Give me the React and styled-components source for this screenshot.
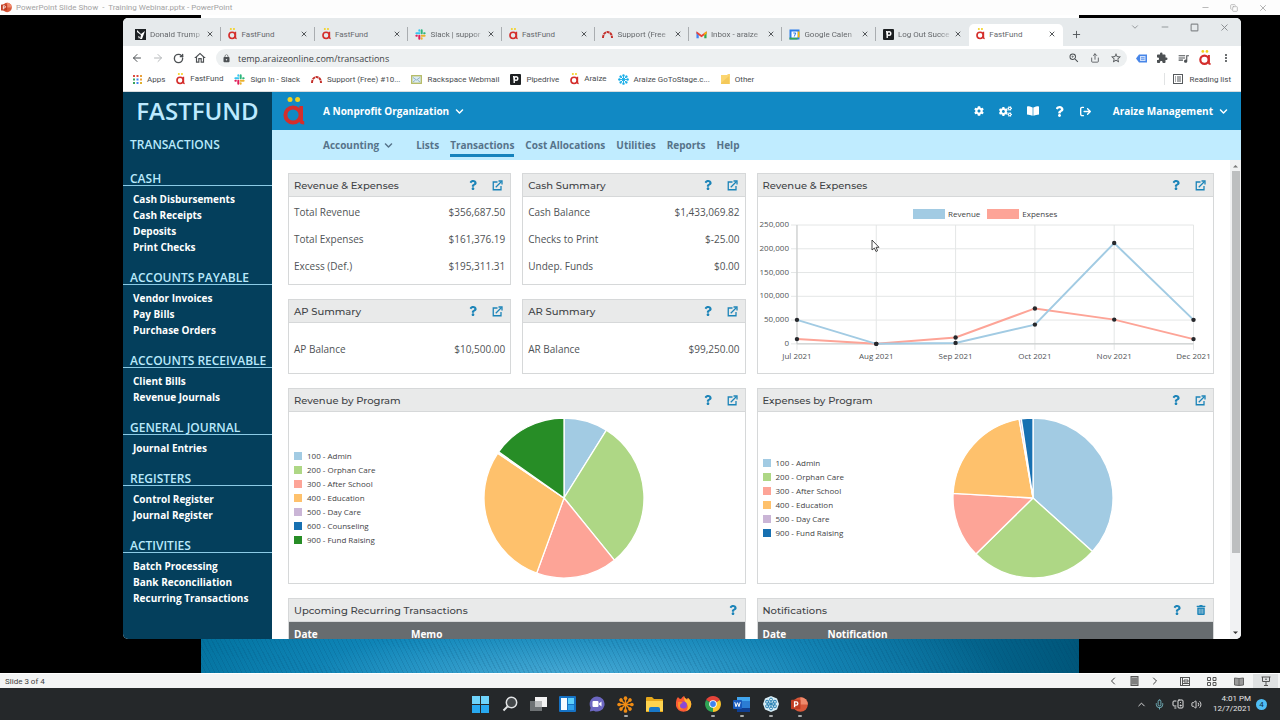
import React from "react";
import styled, { createGlobalStyle, css } from "styled-components";
import {
  FaBookOpen,
  FaChevronDown,
  FaCog,
  FaCogs,
  FaQuestion,
  FaTrashAlt,
} from "react-icons/fa";
import { FaArrowRightFromBracket } from "react-icons/fa6";
import {
  MdExtension,
  MdLock,
  MdMoreVert,
  MdOutlineHome,
  MdQueueMusic,
  MdStarBorder,
  MdZoomIn,
} from "react-icons/md";
import {
  ArrowLeft,
  ArrowRight,
  ChevronDown,
  ChevronLeft,
  ChevronRight,
  ChevronUp,
  Copy,
  Mic,
  Minus,
  MonitorSpeaker,
  Plus,
  RotateCw,
  Share,
  Square,
  Volume2,
  X,
} from "lucide-react";

const SYSTEM_FONT = `8px "Segoe UI", Roboto, "Open Sans", sans-serif`;

const GlobalStyle = createGlobalStyle`
  * {
    box-sizing: border-box;
  }
  body {
    margin: 0;
    background: #000;
    font-family: "Open Sans", "Noto Sans", sans-serif;
    font-size: 10px;
    color: #4f5356;
  }
  button {
    display: inline-flex;
    align-items: center;
    justify-content: center;
    padding: 0;
    border: 0;
    background: none;
    color: inherit;
    font: inherit;
    cursor: pointer;
  }
  a {
    color: inherit;
    text-decoration: none;
  }
  svg {
    display: block;
    flex: none;
  }
`;

/* ---------- data ---------- */

const TABS = [
  { icon: "news", label: "Donald Trump" },
  { icon: "araize", label: "FastFund" },
  { icon: "araize", label: "FastFund" },
  { icon: "slack", label: "Slack | suppor" },
  { icon: "araize", label: "FastFund" },
  { icon: "arch", label: "Support (Free" },
  { icon: "gmail", label: "Inbox - araize" },
  { icon: "calendar", label: "Google Calen" },
  { icon: "pipedrive", label: "Log Out Succe" },
  { icon: "araize", label: "FastFund", active: true },
];

const BOOKMARKS = [
  { icon: "apps", label: "Apps" },
  { icon: "araize", label: "FastFund" },
  { icon: "slack", label: "Sign In - Slack" },
  { icon: "arch", label: "Support (Free) #10..." },
  { icon: "mail", label: "Rackspace Webmail" },
  { icon: "pipedrive", label: "Pipedrive" },
  { icon: "araize", label: "Araize" },
  { icon: "goto", label: "Araize GoToStage.c..." },
  { icon: "folder", label: "Other" },
];

const SECTIONS = [
  {
    title: "Cash",
    items: ["Cash Disbursements", "Cash Receipts", "Deposits", "Print Checks"],
  },
  {
    title: "Accounts Payable",
    items: ["Vendor Invoices", "Pay Bills", "Purchase Orders"],
  },
  { title: "Accounts Receivable", items: ["Client Bills", "Revenue Journals"] },
  { title: "General Journal", items: ["Journal Entries"] },
  { title: "Registers", items: ["Control Register", "Journal Register"] },
  {
    title: "Activities",
    items: ["Batch Processing", "Bank Reconciliation", "Recurring Transactions"],
  },
];

const NAV = ["Lists", "Transactions", "Cost Allocations", "Utilities", "Reports", "Help"];

const MONTHS = ["Jul 2021", "Aug 2021", "Sep 2021", "Oct 2021", "Nov 2021", "Dec 2021"];
const REVENUE = [50500, 0, 2000, 40500, 212000, 50500];
const EXPENSES = [10000, 0, 13500, 74500, 51000, 10000];

const BLUE = "#a2cbe3";
const GREEN = "#aed785";
const PINK = "#fda497";
const ORANGE = "#fec16c";
const LAVENDER = "#cab5d6";
const NAVY = "#1770b1";
const FOREST = "#278d26";

// "to" is the angle in degrees, clockwise from the top, where the slice ends
const REVENUE_SLICES = [
  { label: "100 - Admin", color: BLUE, to: 32 },
  { label: "200 - Orphan Care", color: GREEN, to: 141 },
  { label: "300 - After School", color: PINK, to: 200 },
  { label: "400 - Education", color: ORANGE, to: 304 },
  { label: "500 - Day Care", color: LAVENDER, to: 304.8 },
  { label: "600 - Counseling", color: NAVY, to: 305.2 },
  { label: "900 - Fund Raising", color: FOREST, to: 360 },
];

const EXPENSE_SLICES = [
  { label: "100 - Admin", color: BLUE, to: 132 },
  { label: "200 - Orphan Care", color: GREEN, to: 225.5 },
  { label: "300 - After School", color: PINK, to: 273.3 },
  { label: "400 - Education", color: ORANGE, to: 350 },
  { label: "500 - Day Care", color: LAVENDER, to: 351.6 },
  { label: "900 - Fund Raising", color: NAVY, to: 360 },
];

/* ---------- icons ---------- */

const AraizeMark = ({ size = 11 }) => (
  <svg width={size} height={(size * 28) / 22} viewBox="0 0 22 28" aria-hidden="true">
    <circle cx="7" cy="2.6" r="2.5" fill="#f3d21f" />
    <circle cx="14.6" cy="2.6" r="2.5" fill="#f3d21f" />
    <circle cx="10" cy="18" r="7.6" fill="none" stroke="#d42e2c" strokeWidth="4" />
    <path d="M18.2 9v15q0 1.8 3 1.8" fill="none" stroke="#d42e2c" strokeWidth="3.6" />
  </svg>
);

const Snowflake = ({ size, color }) => (
  <svg width={size} height={size} viewBox="0 0 24 24" aria-hidden="true">
    {[0, 45, 90, 135, 180, 225, 270, 315].map((a) => (
      <g key={a} transform={`rotate(${a} 12 12)`}>
        <path d="M12 12V4" stroke={color} strokeWidth="2" />
        <circle cx="12" cy="3" r="2.6" fill={color} />
      </g>
    ))}
  </svg>
);

const PipedriveMark = () => (
  <svg width="11" height="11" viewBox="0 0 11 11" aria-hidden="true">
    <rect width="11" height="11" rx="1" fill="#1d2022" />
    <circle cx="6" cy="4.6" r="1.8" fill="none" stroke="#fff" strokeWidth="1.4" />
    <path d="M4.2 2.6v6.4M3 2.8h1.4" stroke="#fff" strokeWidth="1.4" />
  </svg>
);

const FAVICONS = {
  araize: <AraizeMark size={9} />,
  pipedrive: <PipedriveMark />,
  goto: <Snowflake size={11} color="#18aee8" />,
  news: (
    <svg width="11" height="11" viewBox="0 0 11 11">
      <rect width="11" height="11" fill="#1d2124" />
      <path d="M2 1l4 4 4-3-3 8H5l1-4L2 3zM3 7l2 1-1 2z" fill="#fff" />
    </svg>
  ),
  slack: (
    <svg width="11" height="11" viewBox="0 0 24 24" strokeWidth="4.4" strokeLinecap="round">
      <path d="M9.4 3v1M3 9.4h6.4" stroke="#36c5f0" />
      <path d="M14.6 3v6.4M21 9.4h-1" stroke="#2eb67d" />
      <path d="M14.6 14.6H21M14.6 21v-1" stroke="#ecb22e" />
      <path d="M9.4 14.6V21M3 14.6h1" stroke="#e01e5a" />
    </svg>
  ),
  arch: (
    <svg width="11" height="11" viewBox="0 0 11 11">
      <path d="M1 9C1 1 10 1 10 9" fill="none" stroke="#c4302b" strokeWidth="2" strokeDasharray="3 0.6" />
    </svg>
  ),
  gmail: (
    <svg width="11" height="11" viewBox="0 0 24 24">
      <path d="M1 6v14h5V10z" fill="#4285f4" />
      <path d="M23 6v14h-5V10z" fill="#34a853" />
      <path d="M1 5l11 8 11-8v5l-11 8L1 10z" fill="#ea4335" />
      <path d="M18 9l5-4v5l-5 4z" fill="#fbbc04" />
    </svg>
  ),
  calendar: (
    <svg width="11" height="11" viewBox="0 0 22 22">
      <path d="M1 1h20v20H1z" fill="#2b7de9" />
      <path d="M17 5h4v12h-4z" fill="#fbbc04" />
      <path d="M1 17h16v4H1z" fill="#34a853" />
      <path d="M5 5h12v12H5z" fill="#fff" />
      <path d="M8.5 8h5l-3 7" fill="none" stroke="#2b7de9" strokeWidth="2" />
    </svg>
  ),
  apps: (
    <svg width="9" height="9" viewBox="0 0 9 9">
      <path d="M0 0h2v2H0zM3.5 0h2v2h-2z" fill="#dc4b3e" />
      <path d="M7 0h2v2H7zM7 3.5h2v2H7z" fill="#e9a13b" />
      <path d="M0 3.5h2v2H0zM0 7h2v2H0z" fill="#3aa35a" />
      <path d="M3.5 3.5h2v2h-2zM3.5 7h2v2h-2z" fill="#4285f4" />
      <path d="M7 7h2v2H7z" fill="#e0b030" />
    </svg>
  ),
  mail: (
    <svg width="11" height="9" viewBox="0 0 11 9">
      <rect x=".7" y=".7" width="9.6" height="7.6" fill="#dcebf2" stroke="#b3b962" strokeWidth="1.3" />
      <path d="M2 2.5l3.5 2.5L9 2.5M2 7l2.5-2M9 7L6.5 5" fill="none" stroke="#7fa6ba" strokeWidth=".8" />
    </svg>
  ),
  folder: (
    <svg width="9" height="10" viewBox="0 0 9 10">
      <path d="M0 1h6l1-1h2v10H0z" fill="#fbd570" />
      <path d="M8 2v8H0V9z" fill="#f4c95a" />
    </svg>
  ),
};

const ExternalLinkIcon = () => (
  <svg width="11" height="11" viewBox="0 0 22 22" fill="none" stroke="currentColor" strokeWidth="2.6">
    <path d="M11 4H2.5v15.5H18V12" />
    <path d="M7.5 14.5L19 3" />
    <path d="M13 2h7v7" />
  </svg>
);

const ReadingListIcon = () => (
  <svg width="10" height="10" viewBox="0 0 10 10" fill="none" stroke="#55595c">
    <rect x=".5" y=".5" width="9" height="9" />
    <path d="M2 3h1M4 3h4M2 5h1M4 5h4M2 7h1M4 7h4" />
  </svg>
);

const ExtensionIcon = () => (
  <svg width="11" height="9" viewBox="0 0 11 9" aria-hidden="true">
    <path d="M0 4.5L3 .5h8v8H3z" fill="#4886e8" />
    <rect x="4" y="2" width="5.5" height="5" fill="#cfe0fb" />
    <path d="M5 3.7h3.5M5 5.3h3.5" stroke="#4886e8" strokeWidth=".8" />
  </svg>
);

/* ---------- desktop shell ---------- */

const Desktop = styled.div`
  position: relative;
  display: flex;
  flex-direction: column;
  height: 100vh;
  min-height: 480px;
  overflow: hidden;
`;

const TitleBar = styled.header`
  display: flex;
  align-items: center;
  gap: 4px;
  height: 15px;
  padding: 0 12px 0 1px;
  background: #fdfdfd;
  color: #a3a3a3;
  font: ${SYSTEM_FONT};
  white-space: pre;
`;

const TitleControls = styled.div`
  display: flex;
  gap: 20px;
  margin-left: auto;
`;

const Stage = styled.div`
  position: relative;
  flex: 1;
  min-height: 0;
  display: flex;
  justify-content: center;
`;

const Slide = styled.div`
  height: 100%;
  aspect-ratio: 4 / 3;
  border-top: 3px solid #fff;
  background:
    repeating-linear-gradient(63deg, rgba(0, 60, 100, 0.14) 0 1px, transparent 1px 4px),
    radial-gradient(ellipse 50% 14% at 42% 101%, #4aabd6, rgba(30, 140, 190, 0.5) 60%, transparent),
    linear-gradient(90deg, #00709c, #0081b5 25%, #0a7fb0 65%, #00567a);
`;

const SlideBar = styled.footer`
  display: flex;
  align-items: center;
  height: 15px;
  padding: 0 2px 0 5px;
  background: #f3f4f4;
  border-top: 1px solid #fff;
  color: #3f3f3f;
  font: ${SYSTEM_FONT};
`;

const SlideTools = styled.div`
  display: flex;
  align-items: center;
  align-self: stretch;
  gap: 11px;
  margin-left: auto;
`;

const ViewTools = styled(SlideTools)`
  margin-left: 6px;
`;

const SlideButton = styled.button`
  align-self: stretch;
  width: ${(p) => (p.$wide ? "16px" : "10px")};
  ${(p) => p.$active && css`
    width: 25px;
    margin-left: -5px;
    background: #dfe1e2;
  `}
`;

/* ---------- browser window ---------- */

const BrowserWindow = styled.main`
  position: absolute;
  inset: 3px 39px 34px 123px;
  display: flex;
  flex-direction: column;
  overflow: hidden;
  border-radius: 5px;
  background: #fff;
`;

const TabStrip = styled.div`
  display: flex;
  align-items: flex-end;
  height: 28px;
  padding-left: 5px;
  background: #e6eaec;
`;

const TabItem = styled.div`
  display: flex;
  align-items: center;
  flex: 0 1 8.4%;
  min-width: 0;
  gap: 4px;
  height: 22px;
  padding: 0 6px 2px 7px;
  border-radius: 5px 5px 0 0;
  background: ${(p) => (p.$active ? "#fff" : "none")};
  border-right: 1px solid transparent;
  ${(p) => !p.$active && !p.$last && css`
    border-image: linear-gradient(transparent 15%, #a9adb0 15% 75%, transparent 75%) 1;
  `}
`;

const TabLabel = styled.button`
  flex: 1;
  justify-content: flex-start;
  min-width: 0;
  color: #66696c;
  white-space: nowrap;
  font: ${SYSTEM_FONT};
  ${(p) => p.$fade && css`
    mask-image: linear-gradient(90deg, #000 80%, rgba(0, 0, 0, 0.2));
  `}
`;

const NewTab = styled.button`
  width: 28px;
  height: 22px;
  padding-bottom: 2px;
`;

const WindowControls = styled.div`
  display: flex;
  align-items: center;
  align-self: flex-start;
  gap: 20px;
  height: 18px;
  margin-left: auto;
  padding-right: 11px;
  color: #85898c;
`;

const Toolbar = styled.div`
  display: flex;
  align-items: center;
  gap: 9px;
  height: 24px;
  padding: 0 9px 0 8px;
  color: #4d5154;
`;

const AddressBar = styled.div`
  display: flex;
  align-items: center;
  flex: 1;
  gap: 7px;
  height: 18px;
  padding: 0 4px 0 6px;
  border-radius: 9px;
  background: #edf0f1;

  button {
    width: 14px;
  }
`;

const UrlInput = styled.input`
  flex: 1;
  min-width: 0;
  padding: 0;
  border: 0;
  outline: 0;
  background: none;
  color: #3f4346;
  font: 9px "Open Sans", "Noto Sans", sans-serif;
`;

const BookmarksBar = styled.nav`
  display: flex;
  align-items: center;
  gap: 11px;
  height: 22px;
  padding: 0 10px 3px;
  border-bottom: 1px solid #d9dcde;
  color: #484c4f;
  font: ${SYSTEM_FONT};
  white-space: nowrap;
`;

const Bookmark = styled.a`
  display: flex;
  align-items: center;
  gap: 5px;
`;

const ReadingList = styled.button`
  gap: 6px;
  height: 12px;
  margin-left: auto;
  padding-left: 8px;
  border-left: 1px solid #e1e3e4;
`;

/* ---------- FastFund page ---------- */

const Page = styled.div`
  display: grid;
  grid-template-columns: 149px minmax(0, 1fr);
  flex: 1;
  min-height: 0;
`;

const Sidebar = styled.aside`
  background: #043f5c;
  color: #fff;
  overflow: hidden;
`;

const Brand = styled.h1`
  margin: 0;
  color: #bdeaff;
  font-size: 24px;
  font-weight: 600;
  line-height: 38px;
  text-align: center;
`;

const SidebarTitle = styled.h2`
  margin: 0 0 0 7px;
  padding-top: 4px;
  color: #b9e9fb;
  font-size: 12px;
  font-weight: 600;
  line-height: 22px;
  text-transform: uppercase;
`;

const SectionHeading = styled.h3`
  margin: 17px 0 5px;
  padding-left: 7px;
  border-bottom: 1px solid #8ccbe6;
  color: #b9e9fb;
  font-size: 12px;
  font-weight: 600;
  line-height: 12px;
  text-transform: uppercase;
  white-space: nowrap;
`;

const SidebarList = styled.ul`
  margin: 0;
  padding: 0 0 0 10px;
  list-style: none;
  font-weight: 700;
  line-height: 16px;
  white-space: nowrap;
`;

const Workspace = styled.section`
  display: flex;
  flex-direction: column;
  min-height: 0;
`;

const AppHeader = styled.header`
  display: flex;
  align-items: center;
  height: 38px;
  padding: 0 13px 0 11px;
  background: #1189c4;
  color: #fff;
  font-weight: 700;
  white-space: nowrap;
`;

const HeaderMenu = styled.button`
  gap: 6px;
  margin-left: ${(p) => p.$indent}px;
`;

const HeaderTools = styled.div`
  display: flex;
  align-items: center;
  gap: 15px;
  margin-left: auto;
`;

const NavBar = styled.nav`
  display: flex;
  align-items: center;
  gap: 11px;
  height: 30px;
  padding-left: 51px;
  background: #c0ecff;
  color: #56738a;
  font-weight: 700;
  white-space: nowrap;
`;

const NavMenu = styled.button`
  gap: 5px;
  margin-right: 12px;
`;

const NavLink = styled.a`
  line-height: 17px;
  padding-top: 3px;
  border-bottom: 3px solid ${(p) => (p.$active ? "#1583bd" : "transparent")};
`;

const Scroller = styled.div`
  display: flex;
  flex: 1;
  min-height: 0;
`;

const Dashboard = styled.div`
  flex: 1;
  display: grid;
  grid-template-columns: repeat(4, minmax(0, 1fr));
  grid-template-rows: 112px 75px 196px auto;
  align-content: start;
  gap: 14px 11px;
  padding: 13px 16px;
  min-width: 0;
  overflow: hidden;
`;

const ScrollTrack = styled.div`
  display: flex;
  flex-direction: column;
  align-items: center;
  width: 11px;
  padding: 4px 0;
  background: #f1f2f3;
  color: #777;
`;

const ScrollThumb = styled.div`
  width: 8px;
  flex: 0 0 81%;
  margin: 3px 0 auto;
  background: #bdbfc0;
`;

const CardBox = styled.article`
  display: flex;
  flex-direction: column;
  grid-column: span ${(p) => p.$cols || 1};
  grid-row: span ${(p) => p.$rows || 1};
  border: 1px solid #d6d8d9;
  background: #fff;
`;

const CardHeader = styled.header`
  display: flex;
  align-items: center;
  gap: 14px;
  height: 23px;
  flex: none;
  padding: 0 7px 0 5px;
  border-bottom: 1px solid #d6d8d9;
  background: #e9eaea;
  color: #1c84b8;
`;

const CardTitle = styled.h2`
  flex: 1;
  margin: 0;
  color: #3f4346;
  font: 500 10px "Montserrat", Inter, "Open Sans", sans-serif;
  white-space: nowrap;
`;

const FigureList = styled.dl`
  margin: ${(p) => (p.$single ? "auto" : 0)} 0;
  padding: 2px 5px 0;
`;

const FigureRow = styled.div`
  display: flex;
  justify-content: space-between;
  line-height: 27px;
  white-space: nowrap;

  dd {
    margin: 0;
  }
`;

const ChartLegend = styled.div`
  display: flex;
  align-items: flex-end;
  justify-content: center;
  gap: 7px;
  height: 23px;
  padding-bottom: 1px;
  color: #3f4346;
  font-size: 8px;
  line-height: 10px;
`;

const ChartKey = styled.span`
  display: flex;
  align-items: center;
  gap: 3px;

  &::before {
    content: "";
    width: 32px;
    height: 10px;
    background: ${(p) => p.$color};
  }
`;

const ChartArea = styled.svg`
  width: 100%;
  height: auto;

  text {
    fill: #505457;
    font-size: 8px;
  }
`;

const PieBody = styled.div`
  display: grid;
  grid-template-columns: 95px minmax(0, 1fr);
  align-items: center;
  justify-items: center;
  flex: 1;
`;

const PieLegend = styled.ul`
  justify-self: start;
  margin: 0;
  padding: 0 0 0 5px;
  list-style: none;
  color: #3f4346;
  font-size: 8px;
  line-height: 14px;
  white-space: nowrap;
`;

const PieKey = styled.li`
  display: flex;
  align-items: center;
  gap: 5px;

  &::before {
    content: "";
    width: 8px;
    height: 8px;
    background: ${(p) => p.$color};
  }
`;

const DataTable = styled.table`
  width: 100%;
  border-collapse: collapse;
  background: #676c6f;
  color: #fff;

  th {
    padding: 0 5px;
    font-size: 10px;
    font-weight: 700;
    line-height: 24px;
    text-align: left;
  }
  th:first-child {
    width: ${(p) => p.$first}px;
  }
`;

/* ---------- taskbar ---------- */

const Taskbar = styled.footer`
  display: grid;
  grid-template-columns: 1fr auto 1fr;
  align-items: center;
  height: 32px;
  background: #25282a;
  color: #e6e6e6;
`;

const TaskIcons = styled.div`
  display: flex;
  grid-column: 2;
  gap: 11px;
`;

const TaskButton = styled.button`
  position: relative;
  width: 18px;
  height: 18px;

  ${(p) => p.$running && css`
    &::after {
      content: "";
      position: absolute;
      bottom: -4px;
      width: 4px;
      height: 2px;
      border-radius: 1px;
      background: #a9abac;
    }
  `}
`;

const Tray = styled.div`
  display: flex;
  align-items: center;
  justify-content: flex-end;
  gap: 7px;
  padding-right: 13px;
`;

const Clock = styled.time`
  margin-left: 4px;
  font: ${SYSTEM_FONT};
  line-height: 10px;
  text-align: right;
`;

const Badge = styled.span`
  width: 11px;
  height: 11px;
  margin-left: -2px;
  border-radius: 50%;
  background: #4fbdf5;
  color: #10303f;
  font: ${SYSTEM_FONT};
  line-height: 11px;
  text-align: center;
`;

const Pointer = styled.svg`
  position: absolute;
  left: 871px;
  top: 239px;
`;

/* ---------- pieces ---------- */

const Card = ({ title, cols, rows, link = true, trash, children }) => (
  <CardBox $cols={cols} $rows={rows}>
    <CardHeader>
      <CardTitle>{title}</CardTitle>
      <button aria-label={`Help: ${title}`}>
        <FaQuestion size={10} />
      </button>
      {link && (
        <button aria-label={`Open ${title}`}>
          <ExternalLinkIcon />
        </button>
      )}
      {trash && (
        <button aria-label={`Clear ${title}`}>
          <FaTrashAlt size={10} />
        </button>
      )}
    </CardHeader>
    {children}
  </CardBox>
);

const Figures = ({ rows }) => (
  <FigureList $single={rows.length === 1}>
    {rows.map(([label, value]) => (
      <FigureRow key={label}>
        <dt>{label}</dt>
        <dd>{value}</dd>
      </FigureRow>
    ))}
  </FigureList>
);

const LineChart = () => {
  const left = 39;
  const right = 436;
  const top = 5;
  const bottom = 124;
  const x = (i) => left + (i * (right - left)) / 5;
  const y = (v) => bottom - (v / 250000) * (bottom - top);
  const line = (data) => data.map((v, i) => `${x(i)},${y(v)}`).join(" ");
  return (
    <ChartArea viewBox="0 0 456 150" role="img" aria-label="Revenue and expenses by month">
      <g stroke="#e4e6e6">
        {[0, 1, 2, 3, 4, 5].map((i) => (
          <g key={i}>
            <line x1={left - 6} x2={right} y1={y(i * 50000)} y2={y(i * 50000)} />
            <line x1={x(i)} x2={x(i)} y1={top} y2={bottom + 6} />
          </g>
        ))}
        <path d={`M${left} ${top}V${bottom}H${right}`} fill="none" stroke="#c6c9ca" />
      </g>
      {[0, 1, 2, 3, 4, 5].map((i) => (
        <text key={i} x="31" y={y(i * 50000) + 2} textAnchor="end">
          {(i * 50000).toLocaleString("en-US")}
        </text>
      ))}
      {MONTHS.map((m, i) => (
        <text key={m} x={x(i)} y="139" textAnchor="middle">
          {m}
        </text>
      ))}
      <polyline points={line(EXPENSES)} fill="none" stroke={PINK} strokeWidth="2" />
      <polyline points={line(REVENUE)} fill="none" stroke={BLUE} strokeWidth="2" />
      {[...REVENUE, ...EXPENSES].map((v, i) => (
        <circle key={i} cx={x(i % 6)} cy={y(v)} r="2.2" fill="#26282c" />
      ))}
    </ChartArea>
  );
};

const Pie = ({ slices }) => {
  const point = (deg) => {
    const a = (deg * Math.PI) / 180;
    return `${81 + 80 * Math.sin(a)} ${81 - 80 * Math.cos(a)}`;
  };
  return (
    <svg width="162" height="162" viewBox="0 0 162 162" role="img" aria-label="Share by program">
      {slices.map((s, i) => {
        const from = i ? slices[i - 1].to : 0;
        const large = s.to - from > 180 ? 1 : 0;
        return (
          <path
            key={s.label}
            d={`M81 81L${point(from)}A80 80 0 ${large} 1 ${point(s.to)}Z`}
            fill={s.color}
            stroke="#fff"
            strokeWidth="1.3"
            strokeLinejoin="round"
          />
        );
      })}
    </svg>
  );
};

const PieCard = ({ title, slices }) => (
  <Card title={title} cols={2}>
    <PieBody>
      <PieLegend>
        {slices.map((s) => (
          <PieKey key={s.label} $color={s.color}>
            {s.label}
          </PieKey>
        ))}
      </PieLegend>
      <Pie slices={slices} />
    </PieBody>
  </Card>
);

const HeadTable = ({ columns, first }) => (
  <DataTable $first={first}>
    <thead>
      <tr>
        {columns.map((c) => (
          <th key={c} scope="col">
            {c}
          </th>
        ))}
      </tr>
    </thead>
  </DataTable>
);

const PowerPointMark = ({ size }) => (
  <svg width={size} height={size} viewBox="0 0 18 18" aria-hidden="true">
    <circle cx="10" cy="9" r="7.8" fill="#d9583a" />
    <path d="M10 1.2a7.8 7.8 0 0 1 7.8 7.8H10z" fill="#f08a6c" />
    <rect y="4" width="10" height="10" rx="1" fill="#c03d22" />
    <path d="M3.800 12V6.200h1.700a1.700 1.700 0 0 1 0 3.500H3.800" fill="none" stroke="#fff" strokeWidth="1.4" />
  </svg>
);

const TASKS = [
  {
    name: "Start",
    icon: (
      <svg width="17" height="17" viewBox="0 0 17 17">
        <path d="M0 0h8v8H0zM9 0h8v8H9z" fill="#6fd3fa" />
        <path d="M0 9h8v8H0zM9 9h8v8H9z" fill="#28a9f0" />
      </svg>
    ),
  },
  {
    name: "Search",
    icon: (
      <svg width="16" height="16" viewBox="0 0 16 16" fill="#44484a" stroke="#e3e5e6">
        <circle cx="9.5" cy="6.5" r="5.2" strokeWidth="1.5" />
        <path d="M5.6 10.4L1.5 14.5" strokeWidth="2" />
      </svg>
    ),
  },
  {
    name: "Task view",
    icon: (
      <svg width="17" height="16" viewBox="0 0 17 16">
        <rect x="5" y="1" width="12" height="10" fill="#f2f2f2" />
        <rect y="5" width="12" height="10" fill="#777a7c" opacity=".9" />
        <rect x="5" y="5" width="7" height="6" fill="#b9bbbc" />
      </svg>
    ),
  },
  {
    name: "Widgets",
    icon: (
      <svg width="17" height="16" viewBox="0 0 17 16">
        <rect width="17" height="16" rx="1" fill="#1572c4" />
        <rect x="2" y="2" width="6" height="12" fill="#f6fbff" />
        <rect x="9" y="2" width="6" height="6" fill="#5dd0fb" />
        <rect x="9" y="9" width="6" height="5" fill="#2ea1ea" />
      </svg>
    ),
  },
  {
    name: "Chat",
    icon: (
      <svg width="16" height="16" viewBox="0 0 16 16">
        <path d="M8 .5a7.5 7.5 0 1 1-3.3 14.2L.8 15.500l.8-3.800A7.5 7.5 0 0 1 8 .5z" fill="#6c67c1" />
        <rect x="3.5" y="5" width="6" height="6" rx="1" fill="#fff" />
        <path d="M10 7.5l2.5-2v5L10 8.5z" fill="#fff" />
      </svg>
    ),
  },
  { name: "GoTo", running: true, icon: <Snowflake size={17} color="#f08c14" /> },
  {
    name: "File Explorer",
    icon: (
      <svg width="17" height="15" viewBox="0 0 17 15">
        <path d="M0 1q0-1 1-1h5l2 2h8q1 0 1 1v12H0z" fill="#e6a81c" />
        <path d="M0 4h17v10H0z" fill="#fdd34f" />
        <path d="M3 15v-3q0-2 2-2h7q2 0 2 2v3z" fill="#1878c8" />
      </svg>
    ),
  },
  {
    name: "Firefox",
    icon: (
      <svg width="17" height="17" viewBox="0 0 17 17">
        <path d="M1 6q0-3 2-5 1 2 3 2 1-2 3-3 0 2 3 3l1-1q4 3 3 8a7.8 7.8 0 0 1-15 0z" fill="#fb5a35" />
        <path d="M9 0q0 2 3 4l1-2q4 3 3 8-1 4-5 5 3-3 1-7-3-2-3-8z" fill="#fdbb30" />
        <circle cx="8.3" cy="9" r="3.6" fill="#8a48d8" />
        <path d="M3 6q3-1 5 1-3 0-3 3 0 3 4 3-5 2-6-3z" fill="#fd8c2a" />
      </svg>
    ),
  },
  {
    name: "Chrome",
    running: true,
    icon: (
      <svg width="16" height="16" viewBox="0 0 16 16">
        <path d="M8 8L1.1 4A8 8 0 0 1 14.9 4z" fill="#e5443a" />
        <path d="M8 8L14.9 4A8 8 0 0 1 8 16z" fill="#fbc42c" />
        <path d="M8 8v8A8 8 0 0 1 1.1 4z" fill="#2fa354" />
        <circle cx="8" cy="8" r="3.8" fill="#fff" />
        <circle cx="8" cy="8" r="2.9" fill="#3f83f0" />
      </svg>
    ),
  },
  {
    name: "Word",
    running: true,
    icon: (
      <svg width="17" height="15" viewBox="0 0 17 15">
        <rect x="4" width="13" height="15" rx="1" fill="#2b7cd3" />
        <rect x="4" width="13" height="4" fill="#41a5ee" />
        <rect x="4" y="11" width="13" height="4" fill="#103f91" />
        <rect y="3" width="9" height="9" rx="1" fill="#185abd" />
        <path d="M1.800 5.200l1.200 4.500 1.500-4 1.500 4 1.200-4.500" fill="none" stroke="#fff" />
      </svg>
    ),
  },
  {
    name: "GoToWebinar",
    running: true,
    icon: (
      <svg width="16" height="16" viewBox="0 0 16 16">
        <path d="M8 0l6 2.5 2 5.500-2 5.500L8 16l-6-2.500L0 8l2-5.500z" fill="#d9eef7" />
        {[0, 60, 120, 180, 240, 300].map((a) => (
          <g key={a} transform={`rotate(${a} 8 8)`}>
            <path d="M8 8V4" stroke="#2d83b4" />
            <circle cx="8" cy="3.6" r="1.5" fill="none" stroke="#2d83b4" />
          </g>
        ))}
      </svg>
    ),
  },
  { name: "PowerPoint", running: true, icon: <PowerPointMark size={17} /> },
];

const Browser = () => (
  <BrowserWindow>
    <TabStrip>
      {TABS.map((t, i) => (
        <TabItem key={i} $active={t.active} $last={i === TABS.length - 2}>
          {FAVICONS[t.icon]}
          <TabLabel $fade={t.icon !== "araize"}>{t.label}</TabLabel>
          <button aria-label="Close tab">
            <X size={8} strokeWidth={3} color="#55595c" />
          </button>
        </TabItem>
      ))}
      <NewTab aria-label="New tab">
        <Plus size={11} />
      </NewTab>
      <WindowControls>
        <button aria-label="Search tabs"><ChevronDown size={10} /></button>
        <button aria-label="Minimize"><Minus size={10} /></button>
        <button aria-label="Maximize"><Square size={9} strokeWidth={3} /></button>
        <button aria-label="Close"><X size={11} /></button>
      </WindowControls>
    </TabStrip>
    <Toolbar>
      <button aria-label="Back"><ArrowLeft size={12} /></button>
      <button aria-label="Forward"><ArrowRight size={12} color="#b5b8ba" /></button>
      <button aria-label="Reload"><RotateCw size={11} strokeWidth={3} /></button>
      <button aria-label="Home"><MdOutlineHome size={14} /></button>
      <AddressBar>
        <MdLock size={9} />
        <UrlInput aria-label="Address" defaultValue="temp.araizeonline.com/transactions" />
        <button aria-label="Zoom"><MdZoomIn size={12} /></button>
        <button aria-label="Share"><Share size={10} /></button>
        <button aria-label="Bookmark this page"><MdStarBorder size={12} /></button>
      </AddressBar>
      <button aria-label="Meeting extension"><ExtensionIcon /></button>
      <button aria-label="Extensions"><MdExtension size={12} /></button>
      <button aria-label="Media"><MdQueueMusic size={13} /></button>
      <button aria-label="Profile"><AraizeMark size={12} /></button>
      <button aria-label="More"><MdMoreVert size={12} /></button>
    </Toolbar>
    <BookmarksBar>
      {BOOKMARKS.map((b, i) => (
        <Bookmark key={i} href="#">
          {FAVICONS[b.icon]}
          {b.label}
        </Bookmark>
      ))}
      <ReadingList>
        <ReadingListIcon />
        Reading list
      </ReadingList>
    </BookmarksBar>
    <Page>
      <Sidebar>
        <Brand>FASTFUND</Brand>
        <SidebarTitle>Transactions</SidebarTitle>
        {SECTIONS.map((s) => (
          <React.Fragment key={s.title}>
            <SectionHeading>{s.title}</SectionHeading>
            <SidebarList>
              {s.items.map((item) => (
                <li key={item}>
                  <a href="#">{item}</a>
                </li>
              ))}
            </SidebarList>
          </React.Fragment>
        ))}
      </Sidebar>
      <Workspace>
        <AppHeader>
          <AraizeMark size={22} />
          <HeaderMenu $indent={18}>
            A Nonprofit Organization
            <FaChevronDown size={9} />
          </HeaderMenu>
          <HeaderTools>
            <button aria-label="Settings"><FaCog size={10} /></button>
            <button aria-label="Configuration"><FaCogs size={13} /></button>
            <button aria-label="Manual"><FaBookOpen size={12} /></button>
            <button aria-label="Help"><FaQuestion size={11} /></button>
            <button aria-label="Sign out"><FaArrowRightFromBracket size={11} /></button>
          </HeaderTools>
          <HeaderMenu $indent={22}>
            Araize Management
            <FaChevronDown size={9} />
          </HeaderMenu>
        </AppHeader>
        <NavBar>
          <NavMenu>
            Accounting
            <FaChevronDown size={9} />
          </NavMenu>
          {NAV.map((n) => (
            <NavLink key={n} href="#" $active={n === "Transactions"}>
              {n}
            </NavLink>
          ))}
        </NavBar>
        <Scroller>
          <Dashboard>
            <Card title="Revenue & Expenses">
              <Figures
                rows={[
                  ["Total Revenue", "$356,687.50"],
                  ["Total Expenses", "$161,376.19"],
                  ["Excess (Def.)", "$195,311.31"],
                ]}
              />
            </Card>
            <Card title="Cash Summary">
              <Figures
                rows={[
                  ["Cash Balance", "$1,433,069.82"],
                  ["Checks to Print", "$-25.00"],
                  ["Undep. Funds", "$0.00"],
                ]}
              />
            </Card>
            <Card title="Revenue & Expenses" cols={2} rows={2}>
              <ChartLegend>
                <ChartKey $color={BLUE}>Revenue</ChartKey>
                <ChartKey $color={PINK}>Expenses</ChartKey>
              </ChartLegend>
              <LineChart />
            </Card>
            <Card title="AP Summary">
              <Figures rows={[["AP Balance", "$10,500.00"]]} />
            </Card>
            <Card title="AR Summary">
              <Figures rows={[["AR Balance", "$99,250.00"]]} />
            </Card>
            <PieCard title="Revenue by Program" slices={REVENUE_SLICES} />
            <PieCard title="Expenses by Program" slices={EXPENSE_SLICES} />
            <Card title="Upcoming Recurring Transactions" cols={2} link={false}>
              <HeadTable columns={["Date", "Memo"]} first={117} />
            </Card>
            <Card title="Notifications" cols={2} link={false} trash>
              <HeadTable columns={["Date", "Notification"]} first={65} />
            </Card>
          </Dashboard>
          <ScrollTrack aria-hidden="true">
            <svg width="5" height="4" viewBox="0 0 5 4"><path d="M0 3.5L2.5 1 5 3.5z" fill="currentColor" /></svg>
            <ScrollThumb />
            <svg width="5" height="4" viewBox="0 0 5 4"><path d="M0 .5L2.5 3 5 .5z" fill="#333" /></svg>
          </ScrollTrack>
        </Scroller>
      </Workspace>
    </Page>
  </BrowserWindow>
);

const App = () => (
  <>
    <GlobalStyle />
    <Desktop>
      <TitleBar>
        <PowerPointMark size={11} />
        {"PowerPoint Slide Show  -  Training Webinar.pptx - PowerPoint"}
        <TitleControls>
          <button aria-label="Minimize"><Minus size={9} /></button>
          <button aria-label="Restore"><Copy size={8} /></button>
          <button aria-label="Close"><X size={10} /></button>
        </TitleControls>
      </TitleBar>
      <Stage>
        <Slide />
        <Browser />
      </Stage>
      <SlideBar>
        Slide 3 of 4
        <SlideTools>
          <SlideButton aria-label="Previous slide"><ChevronLeft size={12} /></SlideButton>
          <SlideButton aria-label="Menu">
            <svg width="9" height="10" viewBox="0 0 9 10" fill="#aaa" stroke="#555">
              <rect x="1" y=".5" width="7" height="9" />
              <path d="M2 3h5M2 5h5M2 7h5" />
            </svg>
          </SlideButton>
          <SlideButton aria-label="Next slide"><ChevronRight size={12} /></SlideButton>
          <ViewTools>
            <SlideButton $wide aria-label="Normal view">
              <svg width="10" height="9" viewBox="0 0 10 9" fill="none" stroke="#555">
                <rect x=".5" y=".5" width="9" height="8" />
                <path d="M2.5 1v7M4 3h4v2H4zM3 6.5h6" />
              </svg>
            </SlideButton>
            <SlideButton $wide aria-label="Slide sorter">
              <svg width="10" height="9" viewBox="0 0 10 9" fill="none" stroke="#555">
                <path d="M.5.5h3v3h-3zM6 .5h3v3H6zM.5 5.5h3v3h-3zM6 5.5h3v3H6z" />
              </svg>
            </SlideButton>
            <SlideButton $wide aria-label="Reading view">
              <svg width="10" height="9" viewBox="0 0 10 9" fill="#999" stroke="#666">
                <path d="M.5 1l4.5.5L9.5 1v7L5 8.5.5 8zM5 1.5v7" />
              </svg>
            </SlideButton>
            <SlideButton $active aria-label="Slide show">
              <svg width="10" height="10" viewBox="0 0 10 10" fill="none" stroke="#555">
                <path d="M.5 1h9M1.5 1v4.5h7V1M5 5.5V9M3 9.5h4M4 3.2h2" />
              </svg>
            </SlideButton>
          </ViewTools>
        </SlideTools>
      </SlideBar>
      <Taskbar>
        <TaskIcons>
          {TASKS.map((t) => (
            <TaskButton key={t.name} aria-label={t.name} $running={t.running}>
              {t.icon}
            </TaskButton>
          ))}
        </TaskIcons>
        <Tray>
          <ChevronUp size={11} />
          <Mic size={11} color="#76b9c4" />
          <MonitorSpeaker size={12} />
          <Volume2 size={11} />
          <Clock>
            4:01 PM
            <br />
            12/7/2021
          </Clock>
          <Badge>4</Badge>
        </Tray>
      </Taskbar>
      <Pointer width="9" height="14" viewBox="0 0 9 14" aria-hidden="true">
        <path d="M1 1v10l2.400-2 1.600 3.500 1.600-.8L5 8.300h3z" fill="#fff" stroke="#333" strokeWidth=".9" />
      </Pointer>
    </Desktop>
  </>
);

export default App;
